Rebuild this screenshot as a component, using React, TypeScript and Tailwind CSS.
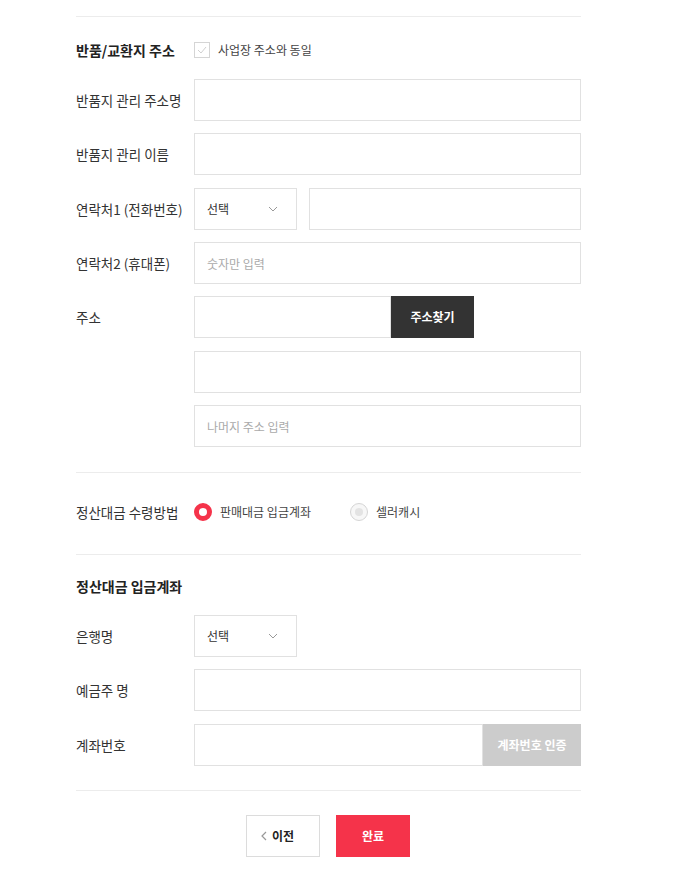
import React from 'react';

const font = { fontFamily: '"Noto Sans CJK KR", "Noto Sans", sans-serif' };

const Chevron = () => (
    <svg width="10" height="6" viewBox="0 0 10 6" className="text-[#999]">
        <path d="M1 1l4 4 4-4" fill="none" stroke="currentColor" strokeWidth="1" />
    </svg>
);

const Label = ({ children }: { children: React.ReactNode }) => (
    <div className="w-[118px] shrink-0 text-[13.5px] text-[#333]">{children}</div>
);

const Input = ({ placeholder, className = '' }: { placeholder?: string; className?: string }) => (
    <input
        type="text"
        placeholder={placeholder}
        className={`h-[42px] border border-[#e1e1e1] bg-white px-3 text-[12px] text-[#333] placeholder:text-[#aaa] outline-none ${className}`}
    />
);

const Select = () => (
    <div className="flex h-[42px] w-[103px] shrink-0 items-center justify-between border border-[#e1e1e1] pl-3 pr-[18px] text-[12px] text-[#333]">
        <span>선택</span>
        <Chevron />
    </div>
);

const Row = ({ label, children, className = '' }: { label?: string; children: React.ReactNode; className?: string }) => (
    <div className={`flex items-center ${className}`}>
        <Label>{label}</Label>
        <div className="flex flex-1 items-center">{children}</div>
    </div>
);

const App = () => {
    return (
        <div className="min-h-screen w-full bg-white" style={font}>
            <div className="ml-[76px] w-[505px] pt-4">
                <div className="border-t border-[#ececec]" />

                {/* 반품/교환지 주소 */}
                <div className="mt-[17px] flex h-8 items-center">
                    <div className="w-[118px] shrink-0 text-[14px] font-bold text-[#222]">반품/교환지 주소</div>
                    <div className="flex items-center">
                        <span className="flex size-4 items-center justify-center border border-[#d5d5d5] bg-white">
                            <svg width="10" height="8" viewBox="0 0 10 8">
                                <path d="M1 4l3 3 5-6" fill="none" stroke="#d0d0d0" strokeWidth="1" />
                            </svg>
                        </span>
                        <span className="ml-2 text-[12px] text-[#444]">사업장 주소와 동일</span>
                    </div>
                </div>

                <div className="mt-[13px] flex flex-col">
                    <Row label="반품지 관리 주소명">
                        <Input className="w-full" />
                    </Row>
                    <Row label="반품지 관리 이름" className="mt-3">
                        <Input className="w-full" />
                    </Row>
                    <Row label="연락처1 (전화번호)" className="mt-[13px]">
                        <Select />
                        <Input className="ml-3 flex-1" />
                    </Row>
                    <Row label="연락처2 (휴대폰)" className="mt-3">
                        <Input className="w-full" placeholder="숫자만 입력" />
                    </Row>
                    <Row label="주소" className="mt-3">
                        <Input className="w-[197px]" />
                        <button className="h-[42px] w-[83px] bg-[#333] text-[12px] font-bold text-white">주소찾기</button>
                    </Row>
                    <Row className="mt-[13px]">
                        <Input className="w-full" />
                    </Row>
                    <Row className="mt-3">
                        <Input className="w-full" placeholder="나머지 주소 입력" />
                    </Row>
                </div>

                <div className="mt-[25px] border-t border-[#ececec]" />

                {/* 정산대금 수령방법 */}
                <div className="mt-[18px] flex h-[42px] items-center">
                    <Label>정산대금 수령방법</Label>
                    <div className="flex items-center">
                        <span className="size-[18px] rounded-full border-[5px] border-[#f5334a] bg-white" />
                        <span className="ml-2 text-[12px] text-[#444]">판매대금 입금계좌</span>
                    </div>
                    <div className="ml-[39px] flex items-center">
                        <span className="flex size-[18px] items-center justify-center rounded-full border border-[#d5d5d5] bg-[#f7f7f7]">
                            <span className="size-2 rounded-full bg-[#e3e3e3]" />
                        </span>
                        <span className="ml-2 text-[12px] text-[#444]">셀러캐시</span>
                    </div>
                </div>

                <div className="mt-[21px] border-t border-[#ececec]" />

                {/* 정산대금 입금계좌 */}
                <div className="mt-[15px] flex h-8 items-center text-[14px] font-bold text-[#222]">정산대금 입금계좌</div>

                <div className="mt-[13px] flex flex-col">
                    <Row label="은행명">
                        <Select />
                    </Row>
                    <Row label="예금주 명" className="mt-3">
                        <Input className="w-full" />
                    </Row>
                    <Row label="계좌번호" className="mt-[13px]">
                        <Input className="flex-1" />
                        <button className="h-[42px] w-[98px] bg-[#cccccc] text-[12px] font-bold text-white">계좌번호 인증</button>
                    </Row>
                </div>

                <div className="mt-6 border-t border-[#ececec]" />

                {/* Buttons */}
                <div className="mt-6 flex justify-center gap-4 pr-px">
                    <button className="flex h-[42px] w-[74px] items-center border border-[#dcdcdc] bg-white pl-[14px] text-[12px] font-bold text-[#222]">
                        <svg width="6" height="10" viewBox="0 0 6 10" className="mr-[5px]">
                            <path d="M5 1L1 5l4 4" fill="none" stroke="#999" strokeWidth="1.2" />
                        </svg>
                        이전
                    </button>
                    <button className="h-[42px] w-[74px] bg-[#f5334a] text-[12px] font-bold text-white">완료</button>
                </div>
            </div>
        </div>
    );
};

export default App;
